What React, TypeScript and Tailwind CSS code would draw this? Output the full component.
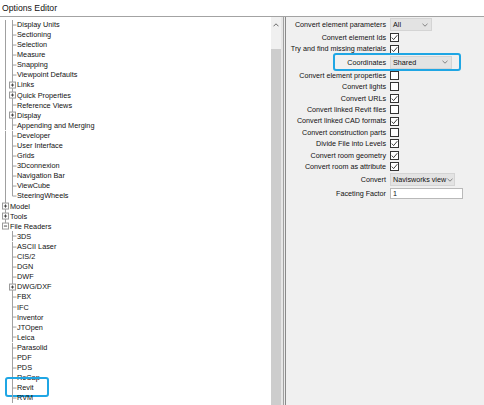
import React from "react";

const LINE = "#a0a0a0";
const ROW_H = 10.1;

type TreeRow = {
  label: string;
  level: 1 | 2;
  top?: "full" | "half" | "none";
  box?: "plus" | "minus";
  sub?: "full" | "half";
};

const groupOne: TreeRow[] = [
  "Display Units",
  "Sectioning",
  "Selection",
  "Measure",
  "Snapping",
  "Viewpoint Defaults",
  "+Links",
  "+Quick Properties",
  "Reference Views",
  "+Display",
  "Appending and Merging",
  "Developer",
  "User Interface",
  "Grids",
  "3Dconnexion",
  "Navigation Bar",
  "ViewCube",
  "SteeringWheels",
].map((s, i, arr) => ({
  label: s.replace("+", ""),
  level: 2 as const,
  top: "full" as const,
  box: s.startsWith("+") ? ("plus" as const) : undefined,
  sub: i === arr.length - 1 ? ("half" as const) : ("full" as const),
}));

const readers: TreeRow[] = [
  "3DS",
  "ASCII Laser",
  "CIS/2",
  "DGN",
  "DWF",
  "+DWG/DXF",
  "FBX",
  "IFC",
  "Inventor",
  "JTOpen",
  "Leica",
  "Parasolid",
  "PDF",
  "PDS",
  "ReCap",
  "Revit",
  "RVM",
].map((s) => ({
  label: s.replace("+", ""),
  level: 2 as const,
  top: "none" as const,
  box: s.startsWith("+") ? ("plus" as const) : undefined,
  sub: "full" as const,
}));

const treeRows: TreeRow[] = [
  ...groupOne,
  { label: "Model", level: 1, top: "full", box: "plus" },
  { label: "Tools", level: 1, top: "full", box: "plus" },
  { label: "File Readers", level: 1, top: "half", box: "minus" },
  ...readers,
];

function ExpandBox({ cx, cy, minus }: { cx: number; cy: number; minus?: boolean }) {
  return (
    <g>
      <rect x={cx - 3} y={cy - 3} width={6} height={6} fill="#ffffff" stroke="#9a9a9a" strokeWidth={1} />
      <line x1={cx - 1.6} y1={cy} x2={cx + 1.6} y2={cy} stroke="#3a3a3a" strokeWidth={0.9} />
      {!minus && <line x1={cx} y1={cy - 1.6} x2={cx} y2={cy + 1.6} stroke="#3a3a3a" strokeWidth={0.9} />}
    </g>
  );
}

function Gutter({ row }: { row: TreeRow }) {
  const w = row.level === 1 ? 10 : 17;
  const mid = ROW_H / 2;
  const topX = 5.5;
  const subX = 12.5;
  return (
    <svg width={w} height={ROW_H} viewBox={`0 0 ${w} ${ROW_H}`} className="block shrink-0">
      {row.top === "full" && <line x1={topX} y1={0} x2={topX} y2={ROW_H} stroke={LINE} strokeWidth={1} />}
      {row.top === "half" && <line x1={topX} y1={0} x2={topX} y2={mid} stroke={LINE} strokeWidth={1} />}
      {row.level === 1 && row.box && <ExpandBox cx={topX} cy={mid} minus={row.box === "minus"} />}
      {row.level === 2 && (
        <>
          <line x1={subX} y1={0} x2={subX} y2={row.sub === "half" ? mid : ROW_H} stroke={LINE} strokeWidth={1} />
          {row.box ? (
            <ExpandBox cx={subX} cy={mid} />
          ) : (
            <line x1={subX} y1={mid} x2={16.5} y2={mid} stroke={LINE} strokeWidth={1} />
          )}
        </>
      )}
    </svg>
  );
}

function TreeItem({ row }: { row: TreeRow }) {
  return (
    <div className="relative flex h-[10.1px] items-center">
      <Gutter row={row} />
      <span className="whitespace-nowrap text-[7.3px] leading-none text-[#111111]">{row.label}</span>
      {row.label === "Revit" && (
        <div className="absolute left-[5px] top-[-5.6px] h-[20px] w-[44px] rounded-[3px] border-[2.5px] border-[#1fa6e4]" />
      )}
    </div>
  );
}

function Chevron() {
  return (
    <svg width={6} height={4} viewBox="0 0 6 4" className="block shrink-0">
      <polyline points="0.5,0.8 3,3.2 5.5,0.8" fill="none" stroke="#6a6a6a" strokeWidth={0.8} />
    </svg>
  );
}

function Check({ on }: { on: boolean }) {
  return (
    <div className="flex h-[9px] w-[9px] items-center justify-center border border-[#333333] bg-white">
      {on && (
        <svg width={7} height={7} viewBox="0 0 7 7" className="block">
          <polyline points="0.8,3.6 2.6,5.6 6.3,1.2" fill="none" stroke="#2a2a2a" strokeWidth={0.9} />
        </svg>
      )}
    </div>
  );
}

function Select({ value, width }: { value: string; width: string }) {
  return (
    <div
      className={`flex h-[13px] items-center justify-between gap-[1px] overflow-hidden border border-[#d4d4d4] bg-[#e3e3e3] pl-[2px] pr-[3px] ${width}`}
    >
      <span className="whitespace-nowrap text-[7.2px] leading-none text-[#111111]">{value}</span>
      <Chevron />
    </div>
  );
}

type Setting =
  | { label: string; type: "check"; on: boolean }
  | { label: string; type: "select"; value: string; width: string; mark?: boolean }
  | { label: string; type: "text"; value: string };

const settings: Setting[] = [
  { label: "Convert element parameters", type: "select", value: "All", width: "w-[42px]" },
  { label: "Convert element Ids", type: "check", on: true },
  { label: "Try and find missing materials", type: "check", on: true },
  { label: "Coordinates", type: "select", value: "Shared", width: "w-[62px]", mark: true },
  { label: "Convert element properties", type: "check", on: false },
  { label: "Convert lights", type: "check", on: false },
  { label: "Convert URLs", type: "check", on: true },
  { label: "Convert linked Revit files", type: "check", on: false },
  { label: "Convert linked CAD formats", type: "check", on: true },
  { label: "Convert construction parts", type: "check", on: false },
  { label: "Divide File into Levels", type: "check", on: true },
  { label: "Convert room geometry", type: "check", on: true },
  { label: "Convert room as attribute", type: "check", on: true },
  { label: "Convert", type: "select", value: "Navisworks view", width: "w-[65px]" },
  { label: "Faceting Factor", type: "text", value: "1" },
];

function SettingRow({ s }: { s: Setting }) {
  const h = s.type === "check" ? "h-[11.4px]" : s.type === "select" ? "h-[15px]" : "h-[13px]";
  return (
    <div className={`relative flex items-center gap-[4px] ${h}`}>
      <div className="w-[100px] shrink-0 whitespace-nowrap text-right text-[7.2px] leading-none text-[#111111]">
        {s.label}
      </div>
      {s.type === "check" && <Check on={s.on} />}
      {s.type === "select" && <Select value={s.value} width={s.width} />}
      {s.type === "text" && (
        <div className="flex h-[11px] w-[73px] items-center border border-[#b9b9b9] bg-white pl-[2px] text-[7.2px] leading-none text-[#111111]">
          {s.value}
        </div>
      )}
      {s.type === "select" && s.mark && (
        <div className="absolute left-[47px] top-[-2px] h-[18px] w-[128px] rounded-[3px] border-[2.5px] border-[#1fa6e4]" />
      )}
    </div>
  );
}

export default function App() {
  return (
    <div className="flex h-[405px] w-[484px] flex-col overflow-hidden bg-white font-['Liberation_Sans',Arial,sans-serif]">
      <div className="flex h-[16px] shrink-0 items-center pl-[2px] text-[8.7px] leading-none text-[#111111]">
        Options Editor
      </div>
      <div className="h-px shrink-0 bg-[#a3a3a3]" />
      <div className="flex min-h-0 flex-1">
        {/* tree */}
        <div className="w-[271px] shrink-0 overflow-hidden bg-white pt-[2.5px]">
          {treeRows.map((r) => (
            <TreeItem key={r.label} row={r} />
          ))}
        </div>
        {/* vertical scrollbar */}
        <div className="flex w-[10px] shrink-0 flex-col bg-[#f0f0f0]">
          <div className="flex h-[16px] shrink-0 items-center justify-center">
            <svg width={6} height={4} viewBox="0 0 6 4" className="block">
              <polyline points="0.5,3.3 3,0.8 5.5,3.3" fill="none" stroke="#5a5a5a" strokeWidth={0.9} />
            </svg>
          </div>
          <div className="h-[16px] shrink-0" />
          <div className="flex-1 bg-[#cdcdcd]" />
        </div>
        {/* splitter */}
        <div className="flex w-[5px] shrink-0">
          <div className="w-[2px] bg-[#e6e6e6]" />
          <div className="w-px bg-[#a0a0a0]" />
          <div className="w-px bg-[#ececec]" />
          <div className="w-px bg-[#8a8a8a]" />
        </div>
        {/* settings */}
        <div className="flex-1 bg-[#f0f0f0]">
          {settings.map((s) => (
            <SettingRow key={s.label} s={s} />
          ))}
        </div>
      </div>
    </div>
  );
}
